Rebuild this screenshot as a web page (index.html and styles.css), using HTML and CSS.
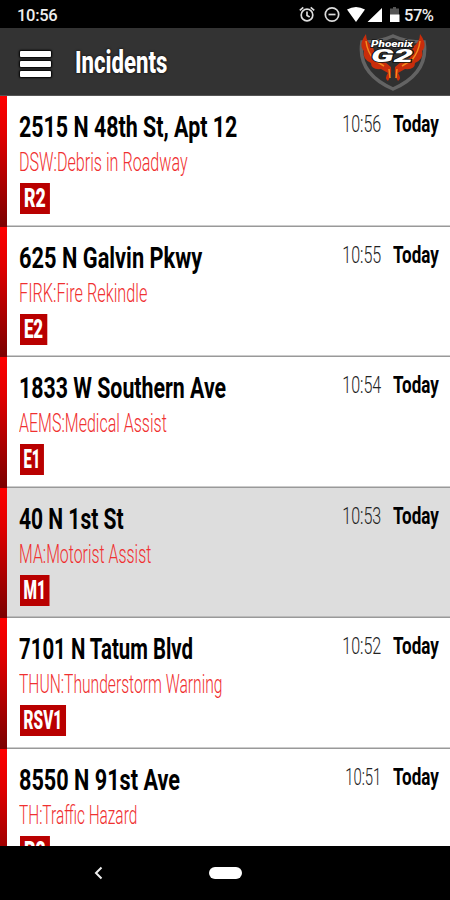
FILE: index.html
```html
<!DOCTYPE html>
<html lang="en">
<head>
  <meta charset="UTF-8" />
  <meta name="viewport" content="width=device-width, initial-scale=1.0"/>
  <title>Incidents</title>
  <link rel="stylesheet" href="styles.css">
</head>
<body>
  <div class="status-bar">
    <span class="clock">10:56</span>
    <svg class="status-icons" width="146" height="28" viewBox="0 0 146 28">
      <!-- alarm -->
      <g fill="none" stroke="#ddd" stroke-width="1.7">
        <circle cx="16" cy="15" r="5.8"/>
        <path d="M16 11.5v4l2.7 1.6M8.8 10.4l3.5-3M23.2 10.4l-3.5-3"/>
      </g>
      <!-- do not disturb -->
      <g fill="none" stroke="#ddd" stroke-width="1.7">
        <circle cx="41" cy="14.5" r="6.7"/>
        <path d="M37.5 14.5h7"/>
      </g>
      <!-- wifi, signal -->
      <path fill="#fff" d="M56 9.5Q65 4.5 74 9.5L65 22zM91 8v14H76.5z"/>
      <!-- battery -->
      <path fill="#555" d="M99 8.5h3V7h3v1.5h3V15h-9z"/>
      <path fill="#fff" d="M99 14.5h9.5V22H99z"/>
    </svg>
    <span class="battery">57%</span>
  </div>

  <header class="header">
    <div class="menu">
      <span></span>
      <span></span>
      <span></span>
    </div>
    <h1>Incidents</h1>
    <svg class="logo" width="70" height="62" viewBox="0 0 70 62">
      <!-- shield -->
      <path d="M35 5Q22 11 4 11Q-1 42 35 58Q71 42 66 11Q48 11 35 5z" fill="#303030" stroke="#636363" stroke-width="3.5"/>
      <!-- wings -->
      <path d="M8 3Q0 14 6 20Q4 28 13 32Q13 39 23 38L30 42Q26 47 30 50Q34 44 33 36L27 31L18 27L15 16Q8 11 8 3z" fill="#c92d0b"/>
      <path d="M62 3Q70 14 64 20Q66 28 57 32Q57 39 47 38L40 42Q44 47 40 50Q36 44 37 36L43 31L52 27L55 16Q62 11 62 3z" fill="#c92d0b"/>
      <path d="M8 10Q9 20 16 29L26 35M62 10Q61 20 54 29L44 35M31 38L32 47M39 38L38 47" fill="none" stroke="#f58a1c" stroke-width="1.5"/>
      <text class="logo-main" x="13" y="31" textLength="42" lengthAdjust="spacingAndGlyphs">G2</text>
      <text class="logo-top" x="13" y="16" textLength="42" lengthAdjust="spacingAndGlyphs">Phoenix</text>
    </svg>
  </header>

  <main class="list">
    <div class="incident">
      <div class="info">
        <h2 style="--fit: 0.714">2515 N 48th St, Apt 12</h2>
        <p style="--fit: 0.645">DSW:Debris in Roadway</p>
        <span class="unit" style="--fit: 0.68">R2</span>
      </div>
      <div class="when"><span class="time">10:56</span><span class="day">Today</span></div>
    </div>
    <div class="incident">
      <div class="info">
        <h2 style="--fit: 0.727">625 N Galvin Pkwy</h2>
        <p style="--fit: 0.65">FIRK:Fire Rekindle</p>
        <span class="unit" style="--fit: 0.65">E2</span>
      </div>
      <div class="when"><span class="time">10:55</span><span class="day">Today</span></div>
    </div>
    <div class="incident">
      <div class="info">
        <h2 style="--fit: 0.711">1833 W Southern Ave</h2>
        <p style="--fit: 0.64">AEMS:Medical Assist</p>
        <span class="unit" style="--fit: 0.57">E1</span>
      </div>
      <div class="when"><span class="time">10:54</span><span class="day">Today</span></div>
    </div>
    <div class="incident selected">
      <div class="info">
        <h2 style="--fit: 0.7">40 N 1st St</h2>
        <p style="--fit: 0.635">MA:Motorist Assist</p>
        <span class="unit" style="--fit: 0.59">M1</span>
      </div>
      <div class="when"><span class="time">10:53</span><span class="day">Today</span></div>
    </div>
    <div class="incident">
      <div class="info">
        <h2 style="--fit: 0.68">7101 N Tatum Blvd</h2>
        <p style="--fit: 0.625">THUN:Thunderstorm Warning</p>
        <span class="unit" style="--fit: 0.59">RSV1</span>
      </div>
      <div class="when"><span class="time">10:52</span><span class="day">Today</span></div>
    </div>
    <div class="incident">
      <div class="info">
        <h2 style="--fit: 0.722">8550 N 91st Ave</h2>
        <p style="--fit: 0.617">TH:Traffic Hazard</p>
        <span class="unit" style="--fit: 0.68">R2</span>
      </div>
      <div class="when"><span class="time" style="--fit: 0.62">10:51</span><span class="day">Today</span></div>
    </div>
  </main>

  <nav class="nav-bar">
    <svg width="10" height="14" viewBox="0 0 10 14"><path d="M8.5 1.5L3 7L8.5 12.5" fill="none" stroke="#eee" stroke-width="2"/></svg>
    <span class="home"></span>
  </nav>
</body>
</html>
```

FILE: styles.css
```css
* {
  box-sizing: border-box;
}

body {
  margin: 0;
  width: 450px;
  height: 900px;
  display: flex;
  flex-direction: column;
  overflow: hidden;
  background: #000;
  font-family: Roboto, "Liberation Sans", sans-serif;
}

h1, h2, p {
  margin: 0;
  white-space: nowrap;
}

/* condensed lettering, --fit is the width factor */
h1, h2, p, .unit, .time, .day {
  transform: scaleX(var(--fit));
  transform-origin: left;
}

.status-bar {
  height: 28px;
  flex: none;
  display: flex;
  align-items: center;
  padding: 2px 15px 0 17px;
  color: #eee;
  font-size: 16.5px;
  font-weight: 500;
}

.clock {
  flex: 1;
  letter-spacing: -0.3px;
}

.status-icons {
  margin-top: -2px;
}

.battery {
  width: 31px;
  margin-left: -33px;
  letter-spacing: -0.5px;
}

.header {
  height: 68px;
  flex: none;
  display: flex;
  align-items: center;
  padding: 0 22px 0 20px;
  background: #333;
  border-bottom: 1px solid #555;
}

.menu {
  display: grid;
  gap: 4px;
  width: 31px;
  margin: 5px 24px 0 0;
}

.menu span {
  height: 6px;
  border-radius: 1px;
  background: #fff;
  box-shadow: 0 0 2px 1px #000;
}

h1 {
  --fit: 0.715;
  flex: 1;
  padding-top: 2px;
  color: #fff;
  font-size: 31px;
  line-height: 40px;
  font-weight: 800;
  text-shadow: 0 0 3px #000;
}

.logo {
  flex: none;
}

.logo text {
  fill: #fff;
  stroke: #111;
  stroke-width: 1.5px;
  paint-order: stroke;
  font-weight: 900;
  font-style: italic;
}

.logo-top {
  font-size: 9px;
}

.logo-main {
  font-size: 19px;
}

.list {
  flex: 1;
  min-height: 0;
  overflow: hidden;
  background: #fff;
}

.incident {
  height: 130.5px;
  display: flex;
  justify-content: space-between;
  padding: 12px 11px 0 12px;
  border-left: 7px solid;
  border-image: linear-gradient(#f00, #e00000 30%, #7a0000) 1;
  box-shadow: inset 0 -1.5px #999;
}

.selected {
  background: #ddd;
}

.info {
  width: 240px;
}

h2 {
  font-size: 30px;
  line-height: 38px;
  font-weight: 700;
}

p {
  color: #f03030;
  font-size: 25px;
  line-height: 34px;
  font-weight: 300;
}

.unit {
  display: inline-block;
  height: 31px;
  margin: 3px 0 0 0.5px;
  padding: 0 6px;
  background: #b90000;
  color: #fff;
  font-size: 26px;
  line-height: 31px;
  font-weight: 900;
}

.when {
  display: flex;
  justify-content: flex-end;
  line-height: 33px;
}

/* times line up on the right, whatever their width */
.time {
  --fit: 0.67;
  margin-right: 12px;
  color: #222;
  font-size: 24px;
  font-weight: 300;
  transform-origin: right;
}

.day {
  --fit: 0.71;
  width: 46px;
  font-size: 24px;
  font-weight: 700;
}

.nav-bar {
  height: 54px;
  flex: none;
  display: flex;
  align-items: center;
  padding-left: 93px;
}

.home {
  width: 33px;
  height: 12px;
  margin-left: 106px;
  border-radius: 6px;
  background: #fff;
}
```
